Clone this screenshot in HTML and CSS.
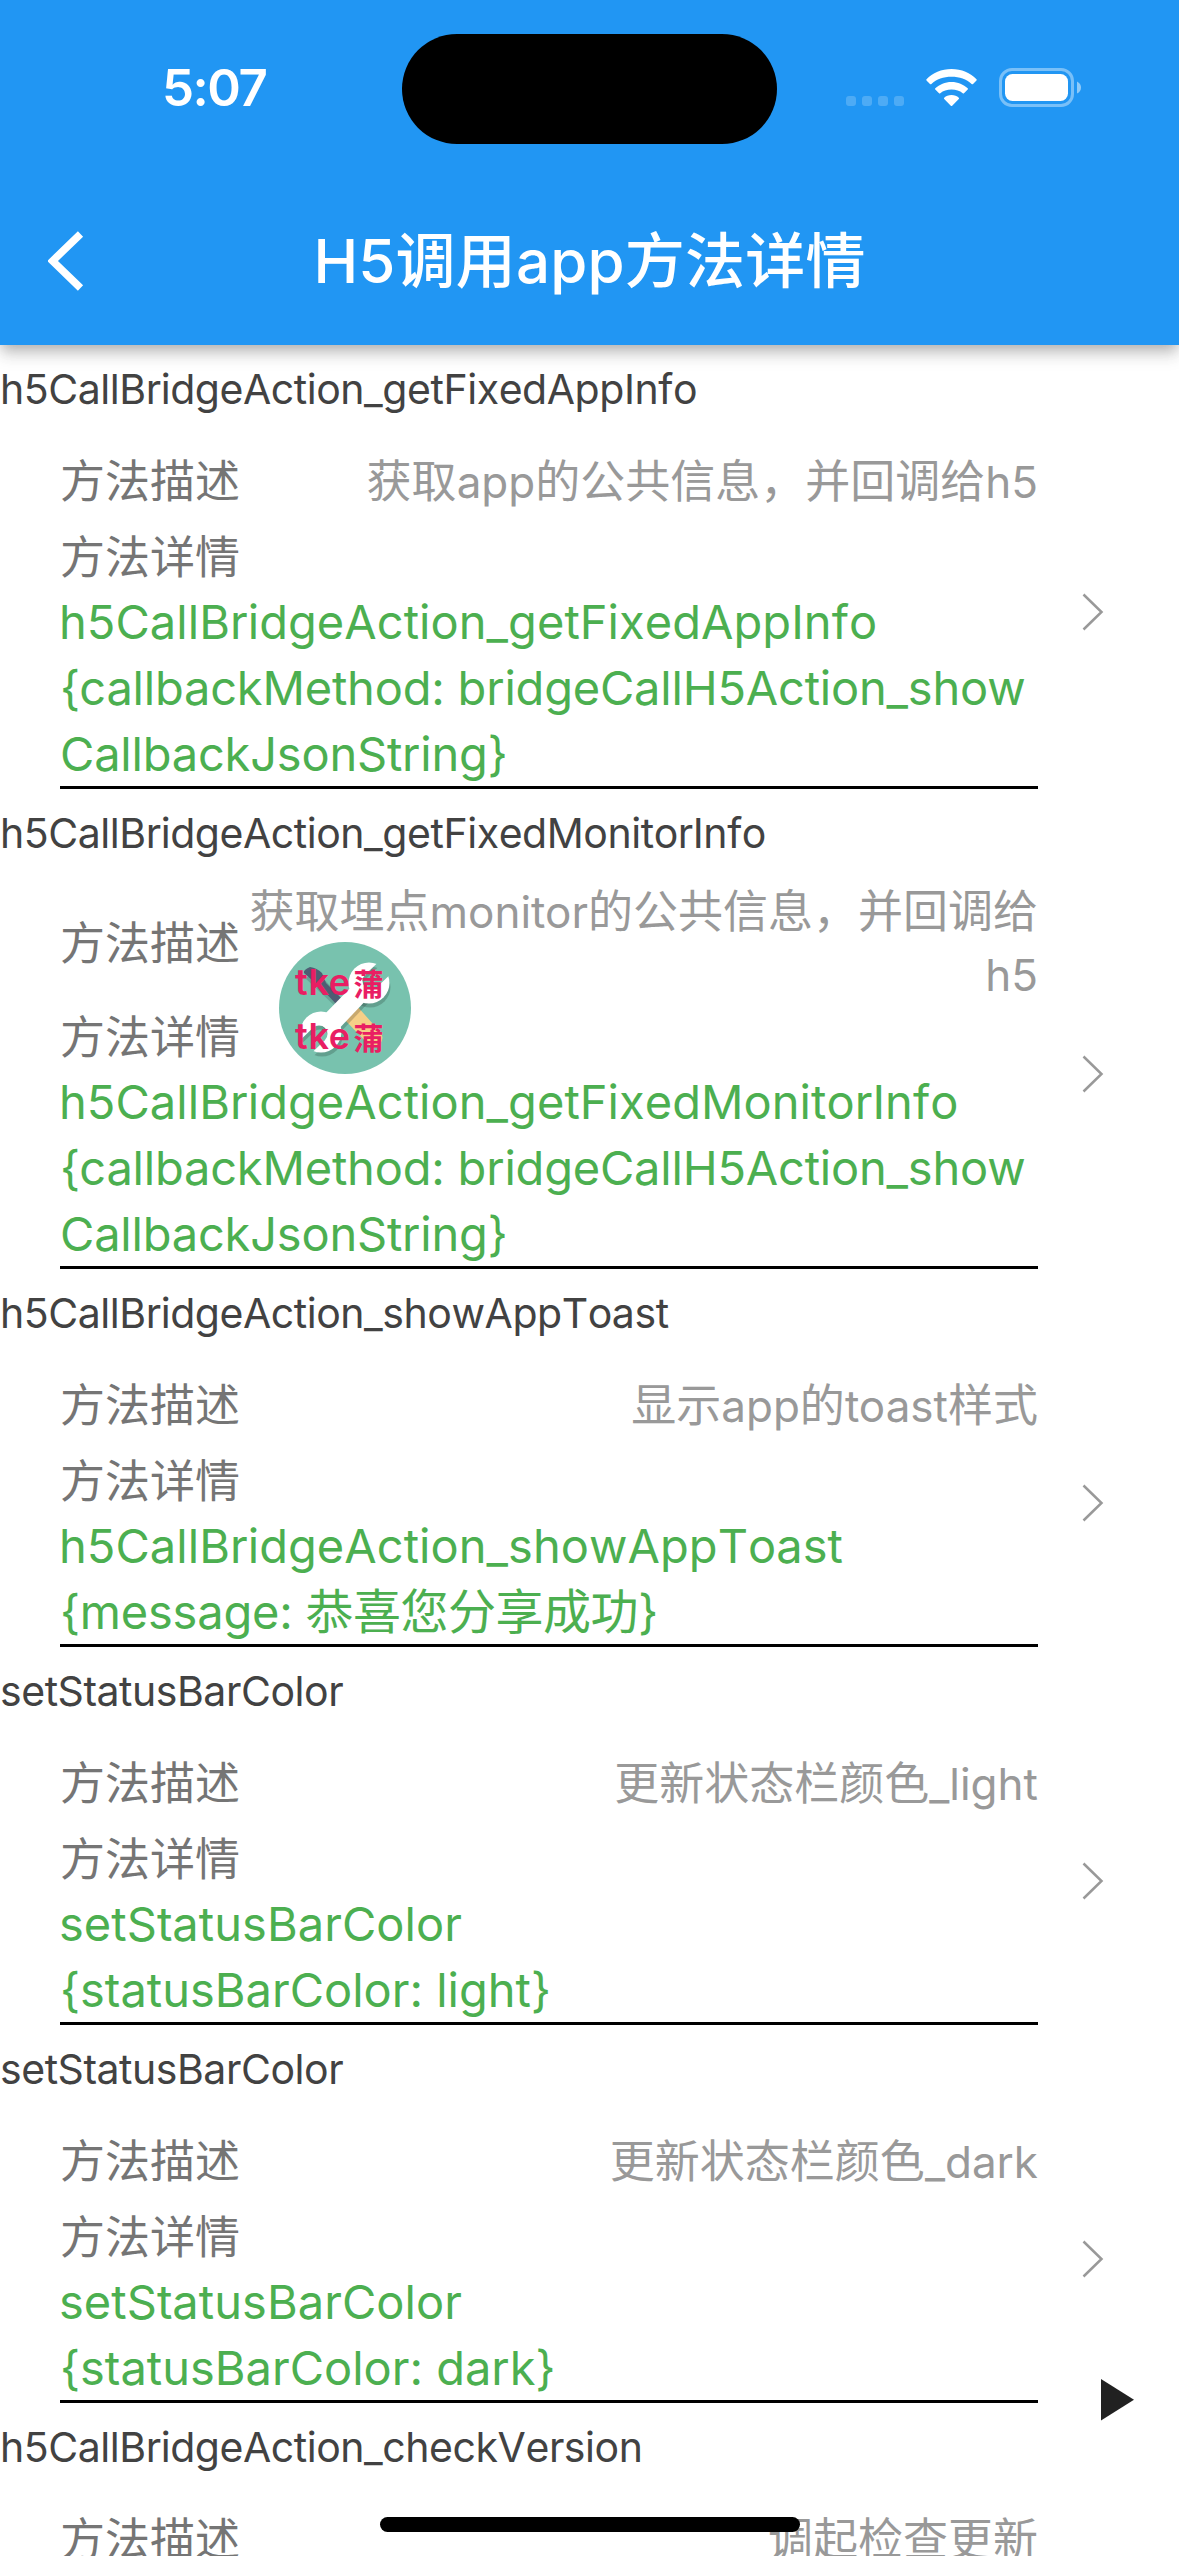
FILE: index.html
```html
<!DOCTYPE html>
<html lang="zh-CN">
<head>
<meta charset="utf-8">
<title>H5调用app方法详情</title>
<link rel="stylesheet" href="styles.css">
</head>
<body>
<div class="screen">
  <header class="header">
    <div class="status">
      <div class="status-side"><span class="time">5:07</span></div>
      <div class="island"></div>
      <div class="status-side status-icons">
        <svg class="cell" width="58" height="12" viewBox="0 0 58 12"><g fill="#fff" fill-opacity=".2"><rect width="10" height="10" y="1" rx="3"/><rect x="16" width="10" height="10" y="1" rx="3"/><rect x="32" width="10" height="10" y="1" rx="3"/><rect x="48" width="10" height="10" y="1" rx="3"/></g></svg>
        <svg class="wifi" width="51" height="38" viewBox="0 0 51 38"><g fill="#fff"><path d="M25.500 0C35.500 0 44.500 4 50.500 10.200Q51 10.800 50.500 11.400L47 15Q46.300 15.600 45.600 15C40.500 10.300 33.500 7.800 25.500 7.800S10.500 10.300 5.400 15Q4.700 15.600 4 15L.5 11.400Q0 10.800.5 10.200C6.500 4 15.500 0 25.500 0Z"/><path d="M25.500 13C32 13 37.500 15.500 41.700 19.300Q42.300 20 41.700 20.600L38 24.300Q37.400 24.900 36.700 24.300C33.800 21.700 30 20.500 25.500 20.500S17.200 21.700 14.300 24.300Q13.600 24.900 13 24.300L9.300 20.600Q8.700 20 9.300 19.300C13.500 15.500 19 13 25.500 13Z"/><path d="M25.500 26C28.500 26 31 27 32.800 28.700Q33.400 29.400 32.800 30L26.200 36.700Q25.500 37.300 24.800 36.700L18.200 30Q17.600 29.400 18.200 28.700C20 27 22.500 26 25.500 26Z"/></g></svg>
        <svg class="battery" width="82" height="39" viewBox="0 0 82 39"><rect x="1.500" y="1.500" width="72" height="36" rx="11.500" fill="none" stroke="#fff" stroke-opacity=".4" stroke-width="3"/><rect x="6" y="6" width="63" height="27" rx="7.500" fill="#fff"/><path d="M78 13.500Q82 15.500 82 19.500T78 25.500Z" fill="#fff" fill-opacity=".5"/></svg>
      </div>
    </div>
    <div class="nav">
      <svg class="back" width="36" height="60" viewBox="0 0 36 60"><path d="M32.500 3L4.500 30L32.500 57" fill="none" stroke="#fff" stroke-width="7.500"/></svg>
      <h1 class="title">H5调用app方法详情</h1>
    </div>
  </header>

  <main class="list">
    <section class="group">
      <h2 class="name">h5CallBridgeAction_getFixedAppInfo</h2>
      <div class="row">
        <div class="cell-body">
          <div class="desc"><span class="label">方法描述</span><span class="value">获取<span class="latin">app</span>的公共信息，并回调给<span class="latin">h5</span></span></div>
          <div class="label">方法详情</div>
          <div class="code"><span class="method">h5CallBridgeAction_getFixedAppInfo</span><br>{callbackMethod: bridgeCallH5Action_show<br>CallbackJsonString}</div>
        </div>
        <svg class="chevron" width="22" height="38" viewBox="0 0 22 38"><path d="M1.500 1.500L19.500 19L1.500 36.500"/></svg>
      </div>
    </section>

    <section class="group">
      <h2 class="name">h5CallBridgeAction_getFixedMonitorInfo</h2>
      <div class="row">
        <div class="cell-body">
          <div class="desc"><span class="label">方法描述</span><span class="value">获取埋点<span class="latin">monitor</span>的公共信息，并回调给<br><span class="latin">h5</span></span></div>
          <div class="label">方法详情</div>
          <div class="code"><span class="method">h5CallBridgeAction_getFixedMonitorInfo</span><br>{callbackMethod: bridgeCallH5Action_show<br>CallbackJsonString}</div>
        </div>
        <svg class="chevron" width="22" height="38" viewBox="0 0 22 38"><path d="M1.500 1.500L19.500 19L1.500 36.500"/></svg>
      </div>
    </section>

    <section class="group">
      <h2 class="name">h5CallBridgeAction_showAppToast</h2>
      <div class="row">
        <div class="cell-body">
          <div class="desc"><span class="label">方法描述</span><span class="value">显示<span class="latin">app</span>的<span class="latin">toast</span>样式</span></div>
          <div class="label">方法详情</div>
          <div class="code"><span class="method">h5CallBridgeAction_showAppToast</span><br>{message: <span class="han">恭喜您分享成功</span>}</div>
        </div>
        <svg class="chevron" width="22" height="38" viewBox="0 0 22 38"><path d="M1.500 1.500L19.500 19L1.500 36.500"/></svg>
      </div>
    </section>

    <section class="group">
      <h2 class="name">setStatusBarColor</h2>
      <div class="row">
        <div class="cell-body">
          <div class="desc"><span class="label">方法描述</span><span class="value">更新状态栏颜色<span class="latin">_light</span></span></div>
          <div class="label">方法详情</div>
          <div class="code"><span class="method">setStatusBarColor</span><br><span class="param">{statusBarColor: light}</span></div>
        </div>
        <svg class="chevron" width="22" height="38" viewBox="0 0 22 38"><path d="M1.500 1.500L19.500 19L1.500 36.500"/></svg>
      </div>
    </section>

    <section class="group">
      <h2 class="name">setStatusBarColor</h2>
      <div class="row">
        <div class="cell-body">
          <div class="desc"><span class="label">方法描述</span><span class="value">更新状态栏颜色<span class="latin">_dark</span></span></div>
          <div class="label">方法详情</div>
          <div class="code"><span class="method">setStatusBarColor</span><br><span class="param">{statusBarColor: dark}</span></div>
        </div>
        <svg class="chevron" width="22" height="38" viewBox="0 0 22 38"><path d="M1.500 1.500L19.500 19L1.500 36.500"/></svg>
      </div>
    </section>

    <section class="group">
      <h2 class="name">h5CallBridgeAction_checkVersion</h2>
      <div class="row">
        <div class="cell-body">
          <div class="desc"><span class="label">方法描述</span><span class="value">调起检查更新</span></div>
        </div>
      </div>
    </section>
  </main>

  <div class="tool-badge">
    <svg width="132" height="132" viewBox="0 0 132 132">
      <defs>
        <mask id="jaws" maskUnits="userSpaceOnUse" x="0" y="0" width="132" height="132">
          <rect width="132" height="132" fill="#fff"/>
          <path d="M92 39L116 16M40 92L16 115" stroke="#000" stroke-width="17"/>
          <circle cx="92" cy="39" r="8.500"/><circle cx="40" cy="92" r="8.500"/>
        </mask>
        <g id="wrench" mask="url(#jaws)">
          <circle cx="90" cy="41" r="20.500"/><circle cx="42" cy="90" r="20.500"/>
          <path d="M40 78L78 39L92 53L54 93Z"/>
        </g>
      </defs>
      <circle cx="66" cy="66" r="66" fill="#78c2ae"/>
      <path d="M25 35L58 66L66 60L43 35Z" fill="#66a596"/>
      <path d="M25 31Q24 28 31 25Q38 26 43 31L47 41L64 58L58 63L42 46Z" fill="#4f5d73"/>
      <path d="M65 77L78 64L102 91A9 9 0 0 1 91 104Z" fill="#f5cf87"/>
      <use href="#wrench" x="1" y="4" fill="#000" fill-opacity=".18"/>
      <use href="#wrench" fill="#fff"/>
    </svg>
    <div class="badge-text"><span>tke<span class="badge-han">蒲</span></span><span>tke<span class="badge-han">蒲</span></span></div>
  </div>
  <svg class="play" width="33" height="42" viewBox="0 0 33 42"><path d="M0 0L33 20.700L0 41.500Z" fill="#212121"/></svg>
  <div class="home-indicator"></div>
</div>
</body>
</html>
```
FILE: styles.css
```css
* { box-sizing: border-box; }

body {
  margin: 0;
  background: #fff;
  font-family: Inter, "Noto Sans CJK SC", sans-serif;
}

.screen {
  position: relative;
  width: 1179px;
  height: 2556px;
  overflow: hidden;
}

svg { display: block; flex: none; }

/* Header */
.header {
  position: relative;
  z-index: 1;
  height: 345px;
  background: #2196f3;
  color: #fff;
  box-shadow: 0 6px 12px -3px rgba(0, 0, 0, .2), 0 12px 15px rgba(0, 0, 0, .1), 0 3px 20px rgba(0, 0, 0, .08);
}

.status {
  display: grid;
  grid-template-columns: 402px 375px 402px;
  height: 177px;
  padding-top: 34px;
}

.status-side { height: 110px; display: flex; }

.time {
  margin: 23px 0 0 162px;
  font-size: 51px;
  font-weight: 600;
  line-height: 62px;
  letter-spacing: -1.5px;
}

.island {
  height: 110px;
  border-radius: 55px;
  background: #000;
}

.status-icons { padding-left: 69px; }
.cell { margin-top: 61px; }
.wifi { margin: 35px 0 0 22px; }
.battery { margin: 34px 0 0 22px; }

.nav {
  display: grid;
  grid-template-columns: 120px 1fr 120px;
  align-items: center;
  height: 168px;
}

.back { margin-left: 48px; }

.title {
  margin: 0;
  font-size: 60px;
  font-weight: 500;
  line-height: 84px;
  letter-spacing: .2px;
  text-align: center;
  white-space: nowrap;
}

/* Method list */
.name {
  margin: 0;
  height: 90px;
  color: #424242;
  font-size: 41px;
  font-weight: 400;
  line-height: 89px;
  letter-spacing: -.45px;
  font-kerning: none;
  white-space: nowrap;
}

.row {
  display: flex;
  align-items: center;
  padding-left: 60px;
}

.cell-body {
  width: 978px;
  border-bottom: 3px solid #000;
}

.desc {
  display: flex;
  align-items: center;
  justify-content: space-between;
  min-height: 90px;
}

.label {
  color: #757575;
  font-size: 45px;
  line-height: 61px;
  padding-top: 2px;
}

.value {
  color: #999;
  font-size: 45px;
  line-height: 63px;
  text-align: right;
  white-space: nowrap;
}

.desc .value { position: relative; top: 1px; }

.latin { line-height: 1; font-size: 44px; }

.code {
  height: auto;
  padding-top: 1px;
  margin-bottom: -1px;
  color: #4caf50;
  font-size: 47px;
  line-height: 66px;
  letter-spacing: -.2px;
  text-indent: -1px;
  white-space: nowrap;
}

.method { letter-spacing: .05px; font-kerning: none; }
.param { letter-spacing: 0; }

.han { font-size: 48px; line-height: 1; letter-spacing: -.5px; }

.chevron {
  margin-left: 44px;
  fill: none;
  stroke: #999;
  stroke-width: 2.500px;
}

/* Floating elements */
.tool-badge {
  position: absolute;
  left: 279px;
  top: 942px;
  width: 132px;
  height: 132px;
}

.badge-text {
  position: absolute;
  inset: 13px 0 0 16px;
  display: flex;
  flex-direction: column;
  color: #e91e63;
  font-size: 36px;
  font-weight: 600;
  line-height: 54px;
  letter-spacing: .6px;
  white-space: nowrap;
}

.badge-han { margin-left: 3px; font-size: 30px; line-height: 1; }

.play { position: absolute; left: 1101px; top: 2379px; }

.home-indicator {
  position: absolute;
  z-index: 2;
  left: 380px;
  top: 2517px;
  width: 420px;
  height: 15px;
  border-radius: 8px;
  background: #000;
}
```
